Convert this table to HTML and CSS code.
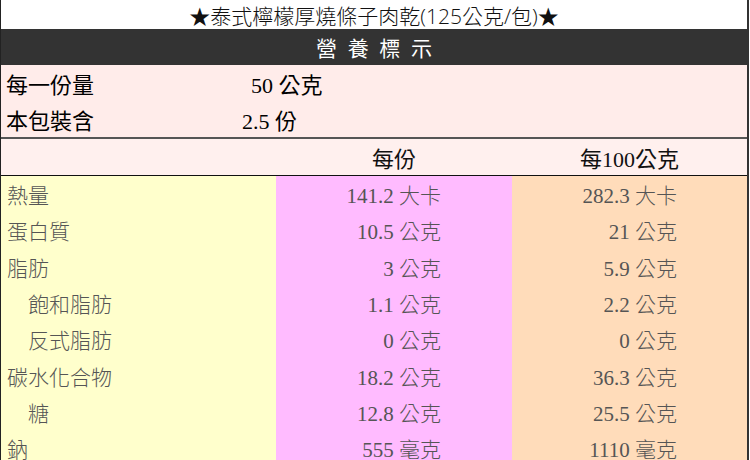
FILE: index.html
```html
<!DOCTYPE html>
<html lang="zh-Hant">
<head>
<meta charset="utf-8">
<title>營養標示</title>
<link rel="stylesheet" href="styles.css">
</head>
<body>
<div class="label">
  <div class="title">★泰式檸檬厚燒條子肉乾(125公克/包)★</div>
  <div class="heading">營 養 標 示</div>
  <div class="serving">
    <div class="srow"><span class="skey">每一份量</span><span class="sval sval-a">50 公克</span></div>
    <div class="srow"><span class="skey">本包裝含</span><span class="sval">2.5 份</span></div>
  </div>
  <div class="colhead">
    <span></span>
    <span class="ch">每份</span>
    <span class="ch">每100公克</span>
  </div>
  <div class="data">
    <div class="drow"><span class="k">熱量</span><span class="v v1">141.2 大卡</span><span class="v v2">282.3 大卡</span></div>
    <div class="drow"><span class="k">蛋白質</span><span class="v v1">10.5 公克</span><span class="v v2">21 公克</span></div>
    <div class="drow"><span class="k">脂肪</span><span class="v v1">3 公克</span><span class="v v2">5.9 公克</span></div>
    <div class="drow"><span class="k sub">飽和脂肪</span><span class="v v1">1.1 公克</span><span class="v v2">2.2 公克</span></div>
    <div class="drow"><span class="k sub">反式脂肪</span><span class="v v1">0 公克</span><span class="v v2">0 公克</span></div>
    <div class="drow"><span class="k">碳水化合物</span><span class="v v1">18.2 公克</span><span class="v v2">36.3 公克</span></div>
    <div class="drow"><span class="k sub">糖</span><span class="v v1">12.8 公克</span><span class="v v2">25.5 公克</span></div>
    <div class="drow"><span class="k">鈉</span><span class="v v1">555 毫克</span><span class="v v2">1110 毫克</span></div>
  </div>
</div>
</body>
</html>
```

FILE: styles.css
```css
html, body {
  margin: 0;
  padding: 0;
  background: #ffffff;
}

body {
  font-family: "Liberation Serif", "Noto Sans CJK TC", serif;
  overflow: hidden;
}

.label {
  width: 746px;
  border-left: 1px solid #222;
  border-right: 2px solid #333;
}

.title {
  height: 29px;
  display: flex;
  align-items: center;
  justify-content: center;
  font-family: "Open Sans", "Noto Sans CJK TC", sans-serif;
  font-size: 21px;
  font-weight: 300;
  color: #111;
  background: #ffffff;
}

.heading {
  height: 36px;
  display: flex;
  align-items: center;
  justify-content: center;
  background: #333333;
  color: #ffffff;
  font-family: "Noto Sans CJK TC", sans-serif;
  font-size: 21px;
  letter-spacing: 3px;
  padding-left: 3px;
}

.serving {
  background: #ffecea;
  border-bottom: 2px solid #555;
}

.srow {
  height: 36px;
  display: grid;
  grid-template-columns: 241px 1fr;
  align-items: center;
  font-size: 22px;
  color: #000;
}

.skey {
  padding-left: 5px;
  font-family: "Noto Sans CJK TC", sans-serif;
}

.sval-a {
  padding-left: 9px;
}

.colhead {
  height: 36px;
  display: grid;
  grid-template-columns: 275px 236px 235px;
  align-items: center;
  background: #fff0ee;
  border-bottom: 1px solid #111;
  font-size: 22px;
  color: #111;
}

.ch {
  text-align: center;
}

.data {
  display: grid;
  grid-template-columns: 275px 236px 235px;
  background: linear-gradient(to right, #ffffcc 0 275px, #ffbbff 275px 511px, #ffdcba 511px);
}

.drow {
  display: contents;
}

.drow > span {
  height: 36.3px;
  display: flex;
  align-items: center;
  font-size: 21px;
  font-weight: 300;
  color: #555;
}

.k {
  padding-left: 6px;
  font-family: "Noto Sans CJK TC", sans-serif;
  color: #4a4a40;
}

.k.sub {
  padding-left: 27px;
}

.v {
  justify-content: flex-end;
  padding-right: 71px;
}

.v2 {
  padding-right: 70px;
}
```
